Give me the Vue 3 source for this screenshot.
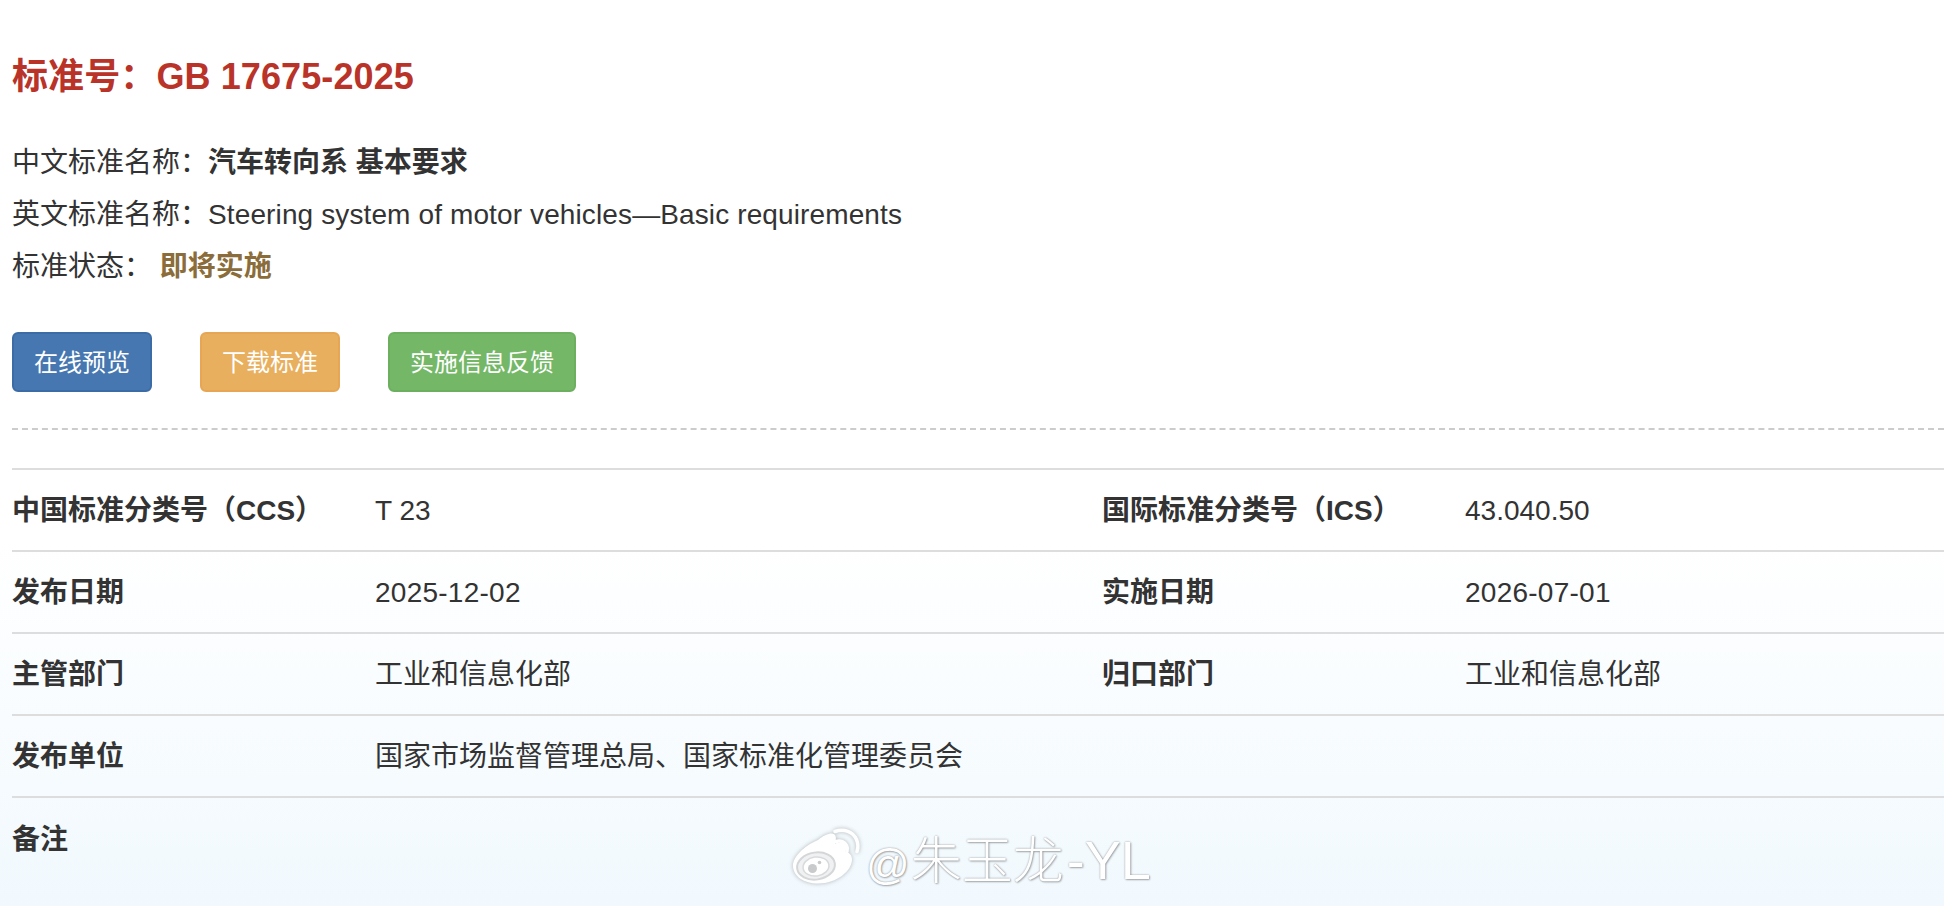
<script setup>
const rows = [
  ['中国标准分类号（CCS）', 'T 23', '国际标准分类号（ICS）', '43.040.50'],
  ['发布日期', '2025-12-02', '实施日期', '2026-07-01'],
  ['主管部门', '工业和信息化部', '归口部门', '工业和信息化部'],
  ['发布单位', '国家市场监督管理总局、国家标准化管理委员会', '', ''],
  ['备注', '', '', '']
]
</script>

<template>
  <main class="page">
    <h1 class="title">标准号：GB 17675-2025</h1>
    <p class="line">中文标准名称：<b>汽车转向系 基本要求</b></p>
    <p class="line">英文标准名称：<span class="en">Steering system of motor vehicles—Basic requirements</span></p>
    <p class="line">标准状态： <b class="status">即将实施</b></p>
    <div class="actions">
      <button class="btn blue">在线预览</button>
      <button class="btn orange">下载标准</button>
      <button class="btn green">实施信息反馈</button>
    </div>
    <div class="dashed"></div>
    <section class="table">
      <div v-for="(r, i) in rows" :key="i" class="row">
        <div class="th">{{ r[0] }}</div>
        <div class="td" :class="{ date: i === 1 }">{{ r[1] }}</div>
        <div class="th">{{ r[2] }}</div>
        <div class="td" :class="{ date: i === 1 }">{{ r[3] }}</div>
      </div>
    </section>
    <div class="watermark">
      <svg class="logo" viewBox="0 0 70 60" width="70" height="60" aria-hidden="true">
        <path class="wave" d="M44 5.500c9-3 18 0 21.500 8 1.800 4.200 1.800 8 .5 12" />
        <path class="wave" d="M45 15.500c4.500-1.500 9 .5 10.700 4.200.8 1.800.9 3.800.3 5.800" />
        <path class="body" d="M27 14c7-6 14-8 16.500-5.500 2 2 1.500 5.500.5 9 7-2.500 11-.5 11.500 3 .3 2-.5 3.800-1 5 3.500 1 6.500 3.500 6.500 8 0 11-15 24-34 24C13.500 57.500 2 50.500 2 39.500 2 31 13 20 27 14Z" />
        <ellipse class="ring" cx="25" cy="40" rx="19" ry="13.500" transform="rotate(-8 25 40)" />
        <ellipse class="inner" cx="25" cy="40.500" rx="13" ry="9.500" transform="rotate(-8 25 40.500)" />
        <circle class="eye" cx="21.500" cy="42.500" r="4.500" />
        <circle class="eye" cx="28.500" cy="36.500" r="1.800" />
      </svg>
      <span class="mark"><span class="at">@</span>朱玉龙<span class="tail">-YL</span></span>
    </div>
  </main>
</template>

<style>
html, body { margin: 0; padding: 0; background: #fff; }
</style>

<style scoped>
.page {
  position: relative;
  box-sizing: border-box;
  height: 906px;
  overflow: hidden;
  padding: 51px 0 0 12px;
  color: #333;
  font-family: "Liberation Sans", "Noto Sans CJK SC", sans-serif;
  font-size: 28px;
  background: linear-gradient(to bottom, #fff 0, #fff 540px, #f1f9fe 906px);
}
.title {
  margin: 0 0 34px;
  font-size: 36px;
  line-height: 52px;
  font-weight: 700;
  letter-spacing: .1px;
  color: #b93329;
}
.line { margin: 0; line-height: 52px; white-space: pre-wrap; }
.en { letter-spacing: .12px; }
.status { color: #8a6d3b; }
.actions { display: flex; gap: 48px; margin-top: 39px; }
.btn {
  box-sizing: border-box;
  height: 60px;
  padding: 2px 20px 0;
  border: 2px solid;
  border-radius: 6px;
  color: #fff;
  font: inherit;
  font-size: 24px;
  line-height: 1;
}
.blue { background: #4677b0; border-color: #3b6ca6; }
.orange { background: #e8af5e; border-color: #e6a654; }
.green { background: #74b767; border-color: #6cb05f; }
.dashed { margin-top: 36px; border-top: 2px dashed #ccc; }
.table { margin-top: 38px; border-top: 2px solid #ddd; }
.row {
  display: grid;
  grid-template-columns: 363px 727px 363px 1fr;
  align-items: center;
  height: 82px;
  box-sizing: border-box;
  padding-top: 2px;
  border-bottom: 2px solid #ddd;
}
.row:last-child { border-bottom: 0; padding-top: 2px; }
.th, .td { line-height: 40px; min-height: 40px; }
.th { font-weight: 700; }
.date { letter-spacing: .25px; }
.watermark {
  position: absolute;
  left: 791px;
  top: 826px;
  display: flex;
  align-items: flex-start;
  gap: 3px;
}
.logo { overflow: visible; filter: drop-shadow(0 0 2px rgba(0, 0, 0, .28)); }
.wave { fill: none; stroke: #fff; stroke-width: 3.500; stroke-linecap: round; }
.body { fill: #fff; }
.ring { fill: #f0f1f2; stroke: #d4d6d8; stroke-width: 2; }
.inner { fill: #fff; stroke: #d8dadc; stroke-width: 1.500; }
.eye { fill: #c8cacc; }
.mark {
  margin-top: 4px;
  font-size: 51px;
  line-height: 60px;
  font-weight: 300;
  color: #fff;
  white-space: nowrap;
  text-shadow: 0 0 2px rgba(0, 0, 0, .4), 1px 1px 2px rgba(0, 0, 0, .25);
}
.at { font-size: 43px; margin-left: 2px; margin-right: 1px; }
.tail { font-size: 54px; letter-spacing: 0; margin-left: 3px; }
</style>
